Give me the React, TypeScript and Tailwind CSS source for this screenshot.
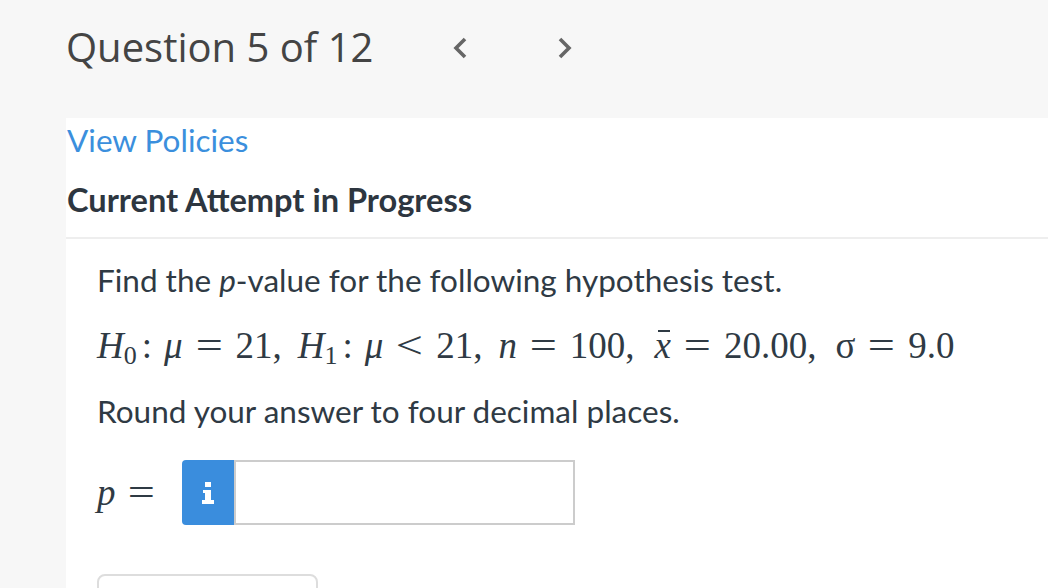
import React from 'react'

const lato = { fontFamily: 'Lato, "Open Sans", sans-serif' }
const serif = { fontFamily: '"Liberation Serif", "Times New Roman", serif' }

function Chevron({ dir }: { dir: 'left' | 'right' }) {
  return (
    <svg width="16" height="26" viewBox="0 0 16 26" className="text-[#666666]">
      <path
        d={dir === 'left' ? 'M13 4 L4 13 L13 22' : 'M3 4 L12 13 L3 22'}
        fill="none"
        stroke="currentColor"
        strokeWidth="3.6"
      />
    </svg>
  )
}

function InfoGlyph() {
  return (
    <svg width="12" height="22" viewBox="0 0 12 22" fill="white">
      <rect x="3" y="0" width="6" height="5" />
      <rect x="1" y="8" width="8" height="3" />
      <rect x="3" y="8" width="6" height="12" />
      <rect x="0" y="18" width="12" height="4" />
    </svg>
  )
}

function Rel({ children }: { children: React.ReactNode }) {
  return <span className="inline-block mx-[16px] scale-x-130">{children}</span>
}

function Math() {
  return (
    <div className="flex items-baseline text-[37px] text-[#2f3a44] whitespace-nowrap" style={serif}>
      <span className="italic">H</span>
      <span className="text-[26px] relative top-[6px]">0</span>
      <span className="ml-[5px]">:</span>
      <span className="italic ml-[12px]">μ</span>
      <Rel>=</Rel>
      <span>21,</span>
      <span className="italic ml-[16px]">H</span>
      <span className="text-[26px] relative top-[6px]">1</span>
      <span className="ml-[5px]">:</span>
      <span className="italic ml-[12px]">μ</span>
      <Rel>&lt;</Rel>
      <span>21,</span>
      <span className="italic ml-[16px]">n</span>
      <Rel>=</Rel>
      <span>100,</span>
      <span className="italic ml-[20px] relative">
        x
        <span className="absolute left-[3px] right-[1px] top-[12px] h-[2px] bg-[#2f3a44]" />
      </span>
      <Rel>=</Rel>
      <span>20.00,</span>
      <span className="ml-[19px]">σ</span>
      <Rel>=</Rel>
      <span>9.0</span>
    </div>
  )
}

export default function App() {
  return (
    <div className="w-[1048px] h-[588px] bg-[#f7f7f7] overflow-hidden">
      {/* header */}
      <div className="h-[118px] flex items-start pt-[21px] pl-[66px]">
        <h1 className="text-[40px] leading-[52px] text-[#444444]" style={{ fontFamily: '"Open Sans", "Noto Sans", sans-serif' }}>
          Question 5 of 12
        </h1>
        <div className="flex items-center gap-[89px] ml-[79px] mt-[14px]">
          <Chevron dir="left" />
          <Chevron dir="right" />
        </div>
      </div>

      {/* content */}
      <div className="ml-[66px] bg-white h-[470px]" style={lato}>
        <div className="pl-[1px] pt-[2px]">
          <a className="block text-[31.5px] leading-[40px] text-[#3b8fdd]">View Policies</a>
          <h2 className="mt-[20px] text-[32.6px] leading-[40px] font-bold text-[#2d3640]">
            Current Attempt in Progress
          </h2>
        </div>
        <div className="mt-[17px] h-[2px] bg-[#eeeeee]" />

        <div className="pl-[31px] pt-[21px] text-[31.5px] text-[#2f3a44]">
          <p className="leading-[40px]">
            Find the <i>p</i>-value for the following hypothesis test.
          </p>
          <div className="mt-[26px] h-[40px] flex items-center">
            <Math />
          </div>
          <p className="mt-[25px] leading-[40px]">Round your answer to four decimal places.</p>

          <div className="mt-[29px] flex items-center">
            <span className="w-[85px] text-[37px] whitespace-nowrap" style={serif}>
              <i>p</i> <span className="inline-block ml-[6px] scale-x-130">=</span>
            </span>
            <div className="w-[52px] h-[65px] bg-[#3a8ddd] rounded-l-[4px] flex items-center justify-center">
              <InfoGlyph />
            </div>
            <div className="w-[341px] h-[65px] border-2 border-[#cccccc] bg-white" />
          </div>

          <div className="mt-[49px] w-[221px] h-[40px] border-2 border-[#dddddd] rounded-[8px]" />
        </div>
      </div>
    </div>
  )
}
